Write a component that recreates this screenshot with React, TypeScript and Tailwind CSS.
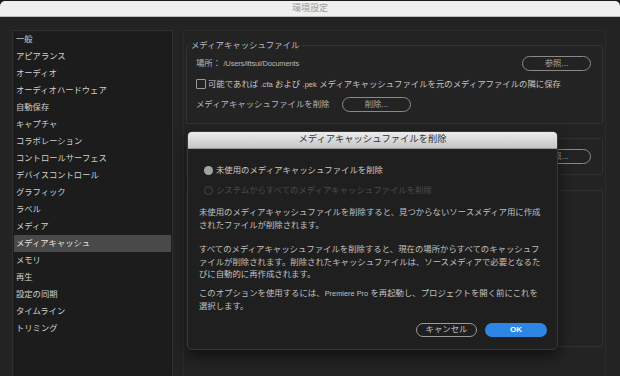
import React from 'react';

const sideItems = [
  '一般',
  'アピアランス',
  'オーディオ',
  'オーディオハードウェア',
  '自動保存',
  'キャプチャ',
  'コラボレーション',
  'コントロールサーフェス',
  'デバイスコントロール',
  'グラフィック',
  'ラベル',
  'メディア',
  'メディアキャッシュ',
  'メモリ',
  '再生',
  '設定の同期',
  'タイムライン',
  'トリミング',
];

function PillButton({ label, className = '' }: { label: string; className?: string }) {
  return (
    <div
      className={`flex items-center justify-center h-[15px] rounded-full border border-[#8a8a8a] text-[8.4px] text-[#a8a8a8] ${className}`}
    >
      {label}
    </div>
  );
}

export default function App() {
  return (
    <div className="w-[620px] h-[376px] overflow-hidden bg-[#232323] relative font-['Liberation_Sans','Noto_Sans_CJK_JP',sans-serif] leading-none">
      {/* Window title bar */}
      <div className="h-[17px] bg-[#1a1a1a] pt-[1px]">
        <div className="h-[16px] bg-[#efefef] rounded-t-[5px] border-b border-[#bdbdbd] flex items-center justify-center text-[9px] text-[#9c9c9c]">
          環境設定
        </div>
      </div>

      <div className="flex pt-[13px] pl-[12px]">
        {/* Sidebar */}
        <aside className="w-[161px] h-[360px] shrink-0 bg-[#1c1c1c] border border-[#2f2f2f] px-[1px]">
          {sideItems.map((item) => (
            <div
              key={item}
              className={`h-[17px] flex items-center pl-[2px] text-[8.3px] ${
                item === 'メディアキャッシュ' ? 'bg-[#494949] text-[#e4e4e4]' : 'text-[#d0d0d0]'
              }`}
            >
              {item}
            </div>
          ))}
        </aside>

        {/* Right panel */}
        <section className="ml-[10px] w-[423px] h-[360px] border border-[#2b2b2b] pl-[2px] pr-[2px] pt-[8px]">
          <fieldset className="border border-[#333333] rounded-[2px] pl-[9px] pr-[11px] pb-[9px]">
            <legend className="ml-[-7px] px-[2px] h-[12px] flex items-center text-[8.4px] text-[#bdbdbd]">
              メディアキャッシュファイル
            </legend>
            <div className="mt-[2px] h-[20px] flex items-center justify-between">
              <span className="text-[8.4px] text-[#b8b8b8]">
                場所： <span className="text-[7.6px] tracking-[-0.2px]">/Users/ittsui/Documents</span>
              </span>
              <PillButton label="参照..." className="w-[69px]" />
            </div>
            <div className="mt-[1px] h-[20px] flex items-center">
              <div className="w-[10px] h-[10px] border border-[#9a9a9a] rounded-[1px] shrink-0" />
              <span className="ml-[2px] text-[8.4px] text-[#c4c4c4] whitespace-nowrap">
                可能であれば <span className="text-[7.6px]">.cfa</span> および <span className="text-[7.6px]">.pek</span>{' '}
                メディアキャッシュファイルを元のメディアファイルの隣に保存
              </span>
            </div>
            <div className="h-[20px] flex items-center">
              <span className="w-[146px] text-[8.4px] text-[#b8b8b8] whitespace-nowrap">メディアキャッシュファイルを削除</span>
              <PillButton label="削除..." className="w-[69px]" />
            </div>
          </fieldset>

          {/* sections below sit under the dialog; only their right edge shows */}
          <fieldset className="mt-[14px] h-[37px] border border-[#2f2f2f] rounded-[2px] pl-[9px] pr-[11px]">
            <div className="h-[35px] flex items-center justify-end">
              <PillButton label="参照..." className="w-[69px]" />
            </div>
          </fieldset>

          <fieldset className="mt-[15px] h-[157px] border border-[#2f2f2f] rounded-[2px]" />
        </section>
      </div>

      {/* Modal dialog */}
      <div className="absolute left-[187px] top-[131px] w-[371px] h-[219px] rounded-[5px] bg-[#1f1f1f] border border-[#383838] shadow-[0_6px_14px_rgba(0,0,0,0.55)] overflow-hidden">
        <div className="h-[17px] bg-gradient-to-b from-[#ececec] to-[#c6c6c6] border-b border-[#9a9a9a] flex items-center justify-center text-[9.3px] text-[#333333]">
          メディアキャッシュファイルを削除
        </div>
        <div className="pl-[11px] pr-[10px]">
          <div className="mt-[14px] h-[14px] flex items-center">
            <div className="ml-[5px] w-[9px] h-[9px] rounded-full bg-[#a2a2a2]" />
            <span className="ml-[3px] text-[8.4px] text-[#cacaca]">未使用のメディアキャッシュファイルを削除</span>
          </div>
          <div className="mt-[6px] h-[14px] flex items-center">
            <div className="ml-[5px] w-[9px] h-[9px] rounded-full border border-[#464646]" />
            <span className="ml-[3px] text-[8.4px] text-[#4c4c4c]">システムからすべてのメディアキャッシュファイルを削除</span>
          </div>

          <div className="mt-[9px] text-[8.4px] leading-[12.5px] text-[#c0c0c0] whitespace-nowrap">
            <p>未使用のメディアキャッシュファイルを削除すると、見つからないソースメディア用に作成</p>
            <p>されたファイルが削除されます。</p>
          </div>
          <div className="mt-[12px] text-[8.4px] leading-[12.5px] text-[#c0c0c0] whitespace-nowrap">
            <p>すべてのメディアキャッシュファイルを削除すると、現在の場所からすべてのキャッシュフ</p>
            <p>ァイルが削除されます。削除されたキャッシュファイルは、ソースメディアで必要となるた</p>
            <p>びに自動的に再作成されます。</p>
          </div>
          <div className="mt-[6px] text-[8.4px] leading-[13.5px] text-[#c0c0c0] whitespace-nowrap">
            <p>
              このオプションを使用するには、<span className="text-[7.4px]">Premiere Pro</span> を再起動し、プロジェクトを開く前にこれを
            </p>
            <p>選択します。</p>
          </div>

          <div className="mt-[9px] flex justify-end gap-[8px]">
            <div className="w-[61px] h-[14px] rounded-full border-[1.5px] border-[#9a9a9a] flex items-center justify-center text-[8.4px] text-[#c4c4c4]">
              キャンセル
            </div>
            <div className="w-[62px] h-[14px] rounded-full bg-[#2d86e6] flex items-center justify-center text-[8px] font-bold text-white">
              OK
            </div>
          </div>
        </div>
      </div>
    </div>
  );
}
